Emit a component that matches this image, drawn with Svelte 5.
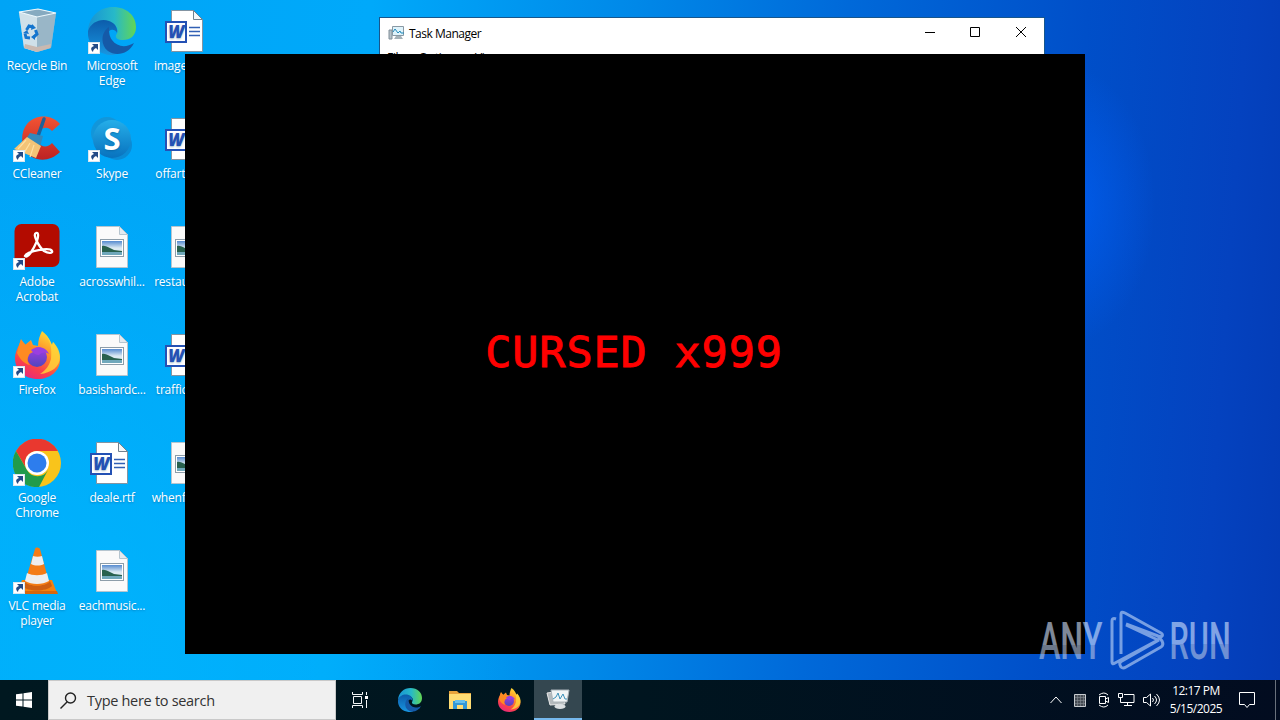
<script lang="ts">
  type Kind = 'bin' | 'edge' | 'word' | 'ccleaner' | 'skype' | 'acrobat' | 'image' | 'firefox' | 'chrome' | 'vlc';

  interface Shortcut {
    label: string;
    kind: Kind;
    link?: boolean;
  }

  const columns: Shortcut[][] = [
    [
      { label: 'Recycle Bin', kind: 'bin' },
      { label: 'CCleaner', kind: 'ccleaner', link: true },
      { label: 'Adobe Acrobat', kind: 'acrobat', link: true },
      { label: 'Firefox', kind: 'firefox', link: true },
      { label: 'Google Chrome', kind: 'chrome', link: true },
      { label: 'VLC media player', kind: 'vlc', link: true },
    ],
    [
      { label: 'Microsoft Edge', kind: 'edge', link: true },
      { label: 'Skype', kind: 'skype', link: true },
      { label: 'acrosswhil...', kind: 'image' },
      { label: 'basishardc...', kind: 'image' },
      { label: 'deale.rtf', kind: 'word' },
      { label: 'eachmusic...', kind: 'image' },
    ],
    [
      { label: 'imagesec.rtf', kind: 'word' },
      { label: 'offarticle.rtf', kind: 'word' },
      { label: 'restaurant...', kind: 'image' },
      { label: 'trafficwee...', kind: 'word' },
      { label: 'whenfinally...', kind: 'image' },
    ],
  ];
</script>

{#snippet edge()}
  <path d="M0 24C1 9 12 0 25 0c14 0 23 9 23 20 0 9-6 13-13 13-5 0-8-2-7-5 3-3 2-10-5-12C14 12 4 15 0 24Z" fill="url(#edge-top)" />
  <path d="M0 24c3-9 13-13 21-10 6 2 9 7 8 12-2-4-8-5-10 2-2 9 4 17 12 18-4 2-9 3-14 1C5 44-1 34 0 24Z" fill="url(#edge-left)" />
  <path d="M21 20c-8 5-9 18-1 24 8 6 21 3 26-8-8 5-17 4-22-3-3-4-3-9-3-13Z" fill="#155aa8" />
{/snippet}

{#snippet firefox()}
  <path d="M29 0c7 6 8 10 10 14l1-3c5 6 7 12 7 18 0 11-10 19-22 19C11 48 2 39 2 27c0-5 2-9 4-13l2-6 4 6 6-5 2 5 5 1c0-6 2-11 4-15Z" fill="url(#fox-body)" />
  <path d="M30 1c8 9 9 16 8 27-2 7-5 11-11 15 11-1 20-7 20-17 0-6-3-11-7-15l-1 3c-2-5-4-9-9-13Z" fill="#ffd83a" opacity=".8" />
  <circle cx="24" cy="26" r="10" fill="url(#fox-globe)" />
  <path d="M4 22c1-4 2-8 4-13l5 5 5-4-1 5 8 2c-1 4-8 4-9 7-2 4-2 7 1 10-6-1-10-6-13-12Z" fill="#ff8a22" />
  <path d="M18 19c7-5 15-3 18 4-5-3-8-1-10 1-3 0-6-2-8-5Z" fill="#9a3fe0" />
{/snippet}

{#snippet word()}
  <path d="M8.500 3.500h22l9 9v32h-31Z" fill="#fff" stroke="#8394a2" />
  <path d="M30.500 3.500v9h9Z" fill="#f4f7f9" stroke="#71818e" />
  <path d="M26 20.500h11M26 24.500h11M26 28.500h11" stroke="#3260b4" stroke-width="1.300" />
  <rect x="3" y="15" width="20" height="20" fill="#fff" stroke="#2451b4" stroke-width="2" />
  <text x="13" y="31" text-anchor="middle" class="word-w">W</text>
{/snippet}

{#snippet image()}
  <path d="M8.500 3.500h23l8 8v33h-31Z" fill="#fafafa" stroke="#b6c5cf" />
  <path d="M31.500 3.500v8h8Z" fill="#e3eaf0" stroke="#b6c5cf" />
  <rect x="12.500" y="16.500" width="23" height="17" fill="#fff" stroke="#8d9da9" />
  <rect x="14" y="18" width="20" height="14" fill="url(#photo-sky)" />
  <path d="M14 23c4-1 7 2 12 4l8 1v1H14Z" fill="#28614e" />
  <path d="M14 29h20v3H14Z" fill="#70a8bb" />
{/snippet}

{#snippet art(kind: Kind)}
  {#if kind === 'bin'}
    <path d="m6 5 19-3 18 4-5 35-14 4-13-4Z" fill="#b9d1df" opacity=".9" />
    <path d="M6 5 24 9v36l-13-4Z" fill="#d9e5eb" opacity=".8" />
    <path d="m24 9 19-3-5 35-14 4Z" fill="#90a6b5" opacity=".6" />
    <path d="m6 5 19-3 18 4-19 4Z" fill="#86aac0" stroke="#edf8fd" stroke-width="1.200" />
    <path d="m12 37 12 3 14-3-1 4-13 4-13-4Z" fill="#c9b9b1" />
    <path d="m13.500 23 2.500-4 4 1M22.500 23l1.500 4-3 3M17 31l-4-.5-1-4" fill="none" stroke="#1475ce" stroke-width="3" />
    <path d="m19 17 4 4-5 2Zm3 10v6l-4-3Zm-12-1 4-3 2 4Z" fill="#1475ce" />
  {:else if kind === 'edge'}
    {@render edge()}
  {:else if kind === 'word'}
    {@render word()}
  {:else if kind === 'image'}
    {@render image()}
  {:else if kind === 'firefox'}
    {@render firefox()}
  {:else if kind === 'ccleaner'}
    <path d="M47 9C39-1 22-1 14 9 6 19 8 36 19 42c9 5 20 3 28-5l-8-9c-4 5-11 4-13 0-5-6-2-14 5-15 4-1 6 1 8 3Z" fill="url(#cc-red)" />
    <path d="m31 4-7 20" stroke="#1d629c" stroke-width="3.500" stroke-linecap="round" />
    <path d="m17 18 13 3-3 11-14-8Z" fill="#3189bd" />
    <path d="m14 22 14 9-5 12L1 34Z" fill="#f3c477" />
    <path d="m13 25-8 9m12-6-6 10m10-8-4 12" stroke="#ffe0a0" stroke-width="1.200" />
  {:else if kind === 'skype'}
    <circle cx="19" cy="18" r="16" fill="#1296da" />
    <circle cx="29" cy="30" r="15" fill="#0a8bd5" />
    <circle cx="24" cy="24" r="19" fill="url(#skype-blue)" />
    <text x="24" y="35" text-anchor="middle" class="skype-s">S</text>
  {:else if kind === 'acrobat'}
    <rect x="1.500" y="1" width="45" height="43" rx="7" fill="#b30b00" />
    <path d="M12 33c3 3 9-8 12-15 2-6 1-9-1-8-4 1 3 14 8 18 5 3 9 2 8 0-2-4-25 0-27 5Z" fill="none" stroke="#fff" stroke-width="2.300" />
  {:else if kind === 'chrome'}
    <circle cx="24" cy="24" r="24" fill="#f9c41b" />
    <path d="M3 12A24 24 0 0 1 45 12H24a12 12 0 0 0-11 17Z" fill="#e9382f" />
    <path d="M3 12a24 24 0 0 0 23 36l9-17a12 12 0 0 1-21 0Z" fill="#219b4b" />
    <circle cx="24" cy="24" r="12" fill="#fff" />
    <circle cx="24" cy="24" r="9.500" fill="#2d7ded" />
  {:else if kind === 'vlc'}
    <path d="M9 33h30l5 13H4Z" fill="#f48210" />
    <path d="M11 34c4 6 22 6 26 0l2 5c-6 6-24 6-30 0Z" fill="#cf5f12" />
    <path d="M22 2c0-2 4-2 5 0l9 33c-6 5-18 5-24 0Z" fill="#f47c16" />
    <path d="m20 9-2 8c4 2 9 2 13 0l-2-8c-3 1-6 1-9 0ZM14 26l-2 8c7 4 17 4 24 0l-2-8c-6 3-14 3-20 0Z" fill="#eee" />
    <path d="M4 44h40l1 3H3Z" fill="#d7670d" />
  {/if}
{/snippet}

<svg class="defs" width="0" height="0" aria-hidden="true">
  <defs>
    <linearGradient id="edge-top"><stop stop-color="#1793d5" /><stop offset=".55" stop-color="#27b9c8" /><stop offset="1" stop-color="#63d653" /></linearGradient>
    <linearGradient id="edge-left" x2="0" y2="1"><stop stop-color="#0c5cab" /><stop offset="1" stop-color="#1896e0" /></linearGradient>
    <linearGradient id="fox-body" x1=".8" x2=".3" y2="1"><stop stop-color="#ffe735" /><stop offset=".45" stop-color="#ff8829" /><stop offset=".75" stop-color="#fb414a" /><stop offset="1" stop-color="#e7287b" /></linearGradient>
    <linearGradient id="fox-globe" x2="0" y2="1"><stop stop-color="#a43ce3" /><stop offset="1" stop-color="#5146bd" /></linearGradient>
    <linearGradient id="cc-red" x2="0" y2="1"><stop stop-color="#f25434" /><stop offset="1" stop-color="#bd2222" /></linearGradient>
    <linearGradient id="skype-blue" x2="0" y2="1"><stop stop-color="#25aee9" /><stop offset="1" stop-color="#0872be" /></linearGradient>
    <linearGradient id="photo-sky" x2="0" y2="1"><stop stop-color="#568bd0" /><stop offset=".5" stop-color="#dceaf2" /></linearGradient>
  </defs>
</svg>

<div class="screen">
  <main class="desktop">
    <div class="shortcuts">
      {#each columns as column}
        <div class="column">
          {#each column as item}
            <div class="shortcut">
              <svg viewBox="0 0 48 48" width="48" height="48">
                {@render art(item.kind)}
                {#if item.link}
                  <rect x="0.500" y="35.500" width="11" height="11" fill="#fff" stroke="#d9e6ef" />
                  <path d="M4 37h6v6L8 41c-2 1-3 2-3 4-3-3-2-5 1-6Z" fill="#244b86" />
                {/if}
              </svg>
              <span>{item.label}</span>
            </div>
          {/each}
        </div>
      {/each}
    </div>

    <section class="task-manager">
      <header>
        <svg width="17" height="16" viewBox="0 0 17 16">
          <path d="M1 5h3v9H1Z" fill="#b5c1c8" stroke="#81909a" />
          <path d="M4.500 1.500h11v9h-11Z" fill="#dff3fb" stroke="#8999a4" />
          <path d="m5 7 2-3 3 4 2-2 1 2h3" fill="none" stroke="#208abb" />
          <path d="M8 11h5l2 3H6Z" fill="#a4b1b8" />
        </svg>
        <h1>Task Manager</h1>
        <div class="controls">
          <svg width="10" height="10"><path d="M0 5.500h10" /></svg>
          <svg width="10" height="10"><path d="M.5.5h9v9h-9Z" /></svg>
          <svg width="10" height="10"><path d="m0 0 10 10M10 0 0 10" /></svg>
        </div>
      </header>
      <nav><span>File</span><span>Options</span><span>View</span></nav>
    </section>

    <section class="cursed">CURSED x999</section>
  </main>

  <footer class="taskbar">
    <div class="start">
      <svg width="16" height="16" fill="#fff"><path d="m0 2.300 6.500-.9v6.100H0Zm7.500-1L16 0v7.500H7.500ZM0 8.500h6.500v6.100L0 13.700Zm7.500 0H16V16l-8.500-1.200Z" /></svg>
    </div>
    <div class="search">
      <svg width="17" height="17" fill="none" stroke="#222" stroke-width="1.400"><circle cx="10.500" cy="6" r="5" /><path d="m7 10-6.500 6.500" /></svg>
      <span>Type here to search</span>
    </div>
    <div class="apps">
      <div class="app">
        <svg width="18" height="16" fill="none" stroke="#f4f7f8"><path d="M.5 0v2.500h10V0M.5 16v-2.500h10V16M1.500 4.500h8v7h-8ZM14.500 0v3M14.500 8v8" /><path d="M13 4h3v3h-3Z" fill="#fff" stroke="none" /></svg>
      </div>
      <div class="app"><svg width="24" height="24" viewBox="0 0 48 48">{@render edge()}</svg></div>
      <div class="app">
        <svg width="22" height="20">
          <path d="M0 1h8l2 2h12v16H0Z" fill="#e8a33b" /><path d="M0 4h22v15H0Z" fill="#ffdc73" />
          <path d="M4 11h14v8h-4v-4H8v4H4Z" fill="#3298d7" /><path d="M6 10h10v3H6Z" fill="#66c0ed" />
        </svg>
      </div>
      <div class="app"><svg width="24" height="24" viewBox="0 0 48 48">{@render firefox()}</svg></div>
      <div class="app active">
        <svg width="24" height="22">
          <path d="m1 5 15-2 3 13-15 1Z" fill="#b4babd" stroke="#e9e9e9" />
          <path d="M5 2h18l-2 12H7Z" fill="#f1f5f6" stroke="#aab3b8" />
          <path d="m7 11 3-2 2-4 2 6 3-5 2 5h2" fill="none" stroke="#3c91b9" />
          <path d="M12 15h5v3h-5Z" fill="#bcc2c5" /><ellipse cx="14" cy="18.500" rx="5.500" ry="2.500" fill="#dbe0e2" />
        </svg>
      </div>
    </div>
    <div class="tray">
      <svg width="12" height="8"><path d="m.5 7 5.500-6 5.500 6" /></svg>
      <svg width="12" height="13"><path d="M.5.5h11v12H.5Z" fill="#454b53" stroke="#c8ccd0" /><path d="M3.500 1v11M6.500 1v11M9.500 1v11M1 3.500h10M1 6.500h10M1 9.500h10" stroke="#858c92" stroke-width=".6" /></svg>
      <svg width="12" height="16"><path d="M1 3q5-4 9 0M1 13q5 4 9 0M1.500 4.500h6v7h-6ZM7.500 7l3-1.500v5l-3-1.500" /></svg>
      <svg class="near" width="17" height="14"><path d="M6 1.500h10v8H5M2.500 5v4.500H5M9.500 9.500v3M6 12.500h8M.5.5h4v4h-4Z" /></svg>
      <svg class="near" width="17" height="14"><path d="M.5 4.500h3l4-3.500v12l-4-3.500h-3ZM9.500 5q2 2 0 4M11.500 3q4 4 0 8M13.500 1q6 6 0 12" /></svg>
      <div class="clock"><span>12:17 PM</span><span>5/15/2025</span></div>
      <svg class="notice" width="17" height="16"><path d="M.5.500h15v12h-5l-2.500 3-2.500-3h-5Z" /></svg>
      <i></i>
    </div>
  </footer>

  <svg class="watermark" width="243" height="72" viewBox="1037 605 243 72">
    <defs>
      <linearGradient id="mark" x2="0" y2="1"><stop offset=".55" stop-color="#d4e5ff" /><stop offset=".56" stop-color="#b5c6e4" /></linearGradient>
    </defs>
    <g opacity=".6">
      <text transform="translate(1039 659) scale(.62 1)">ANY</text>
      <text transform="translate(1169.500 659) scale(.59 1)">RUN</text>
      <path d="M1116 619c-3-1-4 0-4 2v41q0 3 3 1l43-23M1121 654v-40q0-3 4-1l36 20q3 2 0 4l-3-1-32-12M1126 625l32 15M1158 636l4 5q2 4-1 6l-35 20q-3 2-5 0-3-4 1-6l37-21" />
    </g>
  </svg>
</div>

<style>
  :global(body) {
    margin: 0;
    overflow: hidden;
  }

  .defs {
    position: absolute;
  }

  .screen {
    position: relative;
    display: flex;
    flex-direction: column;
    width: 1280px;
    height: 720px;
    overflow: hidden;
    font-family: 'Open Sans', 'Noto Sans', sans-serif;
    font-size: 12px;
  }

  svg {
    display: block;
    flex: none;
  }

  .desktop {
    position: relative;
    height: 680px;
    background:
      radial-gradient(ellipse 90px 140px at 1065px 205px, #005ff4cc, #005ff400),
      radial-gradient(ellipse 520px 520px at 0 100%, #00baff88 30%, #00baff00),
      linear-gradient(94deg, #00a4f6 0%, #00a9fa 28%, #0088e8 48%, #0069d9 64%, #004fc9 82%, #0442bf 94%, #043bb5 100%);
  }

  .shortcuts {
    display: flex;
    padding-top: 7px;
  }

  .column {
    width: 75px;
  }

  .shortcut {
    display: flex;
    flex-direction: column;
    align-items: center;
    width: 74px;
    height: 108px;
    color: #fff;
    text-align: center;
    line-height: 15px;
    letter-spacing: -0.2px;
    text-shadow: 0 1px 2px #00477a66;
  }

  .shortcut span {
    margin-top: 3px;
  }

  .word-w {
    fill: #2451b4;
    font: italic 900 17px 'Open Sans', sans-serif;
  }

  .skype-s {
    fill: #fff;
    font: 700 31px 'Open Sans', sans-serif;
  }

  .task-manager {
    position: absolute;
    top: 17px;
    left: 379px;
    width: 664px;
    height: 60px;
    border: 1px solid #17568c;
    background: #fff;
  }

  .task-manager header {
    display: flex;
    align-items: center;
    height: 30px;
    padding-left: 8px;
  }

  .task-manager h1 {
    margin: 0 0 0 4px;
    font-size: 12px;
    font-weight: 400;
    letter-spacing: -0.5px;
  }

  .controls {
    display: flex;
    gap: 36px;
    margin: 0 18px 2px auto;
    fill: none;
    stroke: #000;
  }

  .controls svg:first-child {
    margin-right: -1px;
  }

  .task-manager nav {
    display: flex;
    gap: 14px;
    padding: 1px 7px;
    letter-spacing: -0.3px;
  }

  .cursed {
    position: absolute;
    top: 54px;
    left: 185px;
    display: flex;
    align-items: center;
    justify-content: center;
    width: 900px;
    height: 600px;
    box-sizing: border-box;
    padding: 0 2px 5px 0;
    background: #000;
    color: #f00;
    font: 43.500px 'DejaVu Sans Mono', monospace;
    letter-spacing: 0.850px;
    -webkit-text-stroke: 0.900px #f00;
  }

  .taskbar {
    display: flex;
    height: 40px;
    background: linear-gradient(90deg, #001820, #00151f 50%, #020c20);
  }

  .start,
  .app {
    display: flex;
    align-items: center;
    justify-content: center;
    width: 48px;
  }

  .search {
    display: flex;
    align-items: center;
    gap: 10px;
    width: 288px;
    box-sizing: border-box;
    padding-left: 11px;
    border: 1px solid #c9c9c9;
    background: #f0f0f0;
    color: #333;
    font-size: 14.500px;
    letter-spacing: -0.3px;
  }

  .apps {
    display: flex;
  }

  .app {
    width: 49.500px;
  }

  .app.active {
    width: 48px;
    box-sizing: border-box;
    border-bottom: 2px solid #76b9ed;
    background: #344750;
  }

  .tray {
    display: flex;
    align-items: center;
    margin-left: auto;
    fill: none;
    stroke: #fff;
  }

  .tray svg + svg {
    margin-left: 12px;
  }

  .tray svg.near {
    margin-left: 8px;
  }

  .clock {
    display: flex;
    flex-direction: column;
    align-items: center;
    width: 56px;
    margin-left: 8px;
    color: #fff;
    line-height: 18px;
    letter-spacing: -0.5px;
  }

  .tray .notice {
    margin-left: 15px;
  }

  .tray i {
    width: 1px;
    height: 40px;
    margin: 0 4px 0 19px;
    background: #69717c;
  }

  .watermark {
    position: absolute;
    top: 605px;
    left: 1037px;
  }

  .watermark text {
    fill: url(#mark);
    font: 500 52px Roboto, sans-serif;
  }

  .watermark path {
    fill: none;
    stroke: #c5daf9;
    stroke-width: 3;
    stroke-linejoin: round;
  }
</style>
